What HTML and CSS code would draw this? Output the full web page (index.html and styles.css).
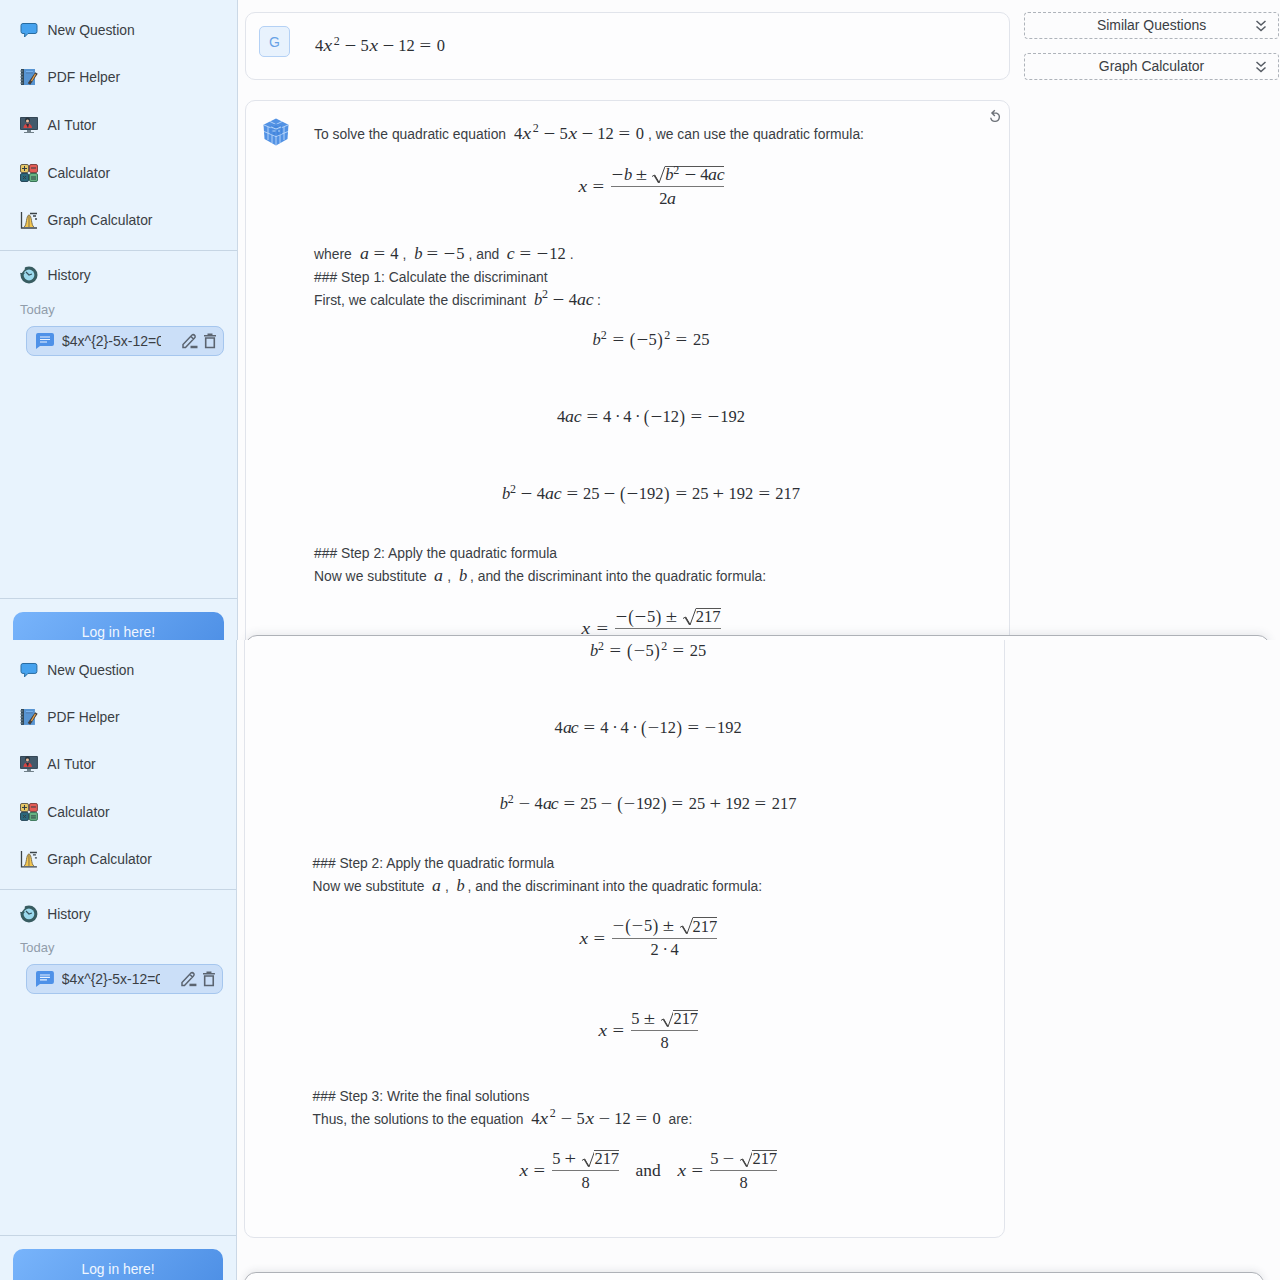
FILE: index.html
```html
<!DOCTYPE html>
<html lang="en">
<head>
<meta charset="utf-8">
<title>Math Solver</title>
<link rel="stylesheet" href="styles.css">
</head>
<body>
<template id="screen">
  <aside class="sidebar">
    <nav class="nav">
      <a class="nav-item"><svg class="icon" viewBox="0 0 18 18"><path d="M3 2.500h12q2 0 2 2v6q0 2-2 2H8L4.500 16l.3-3.500H3q-2 0-2-2v-6q0-2 2-2z" fill="#46a2ee" stroke="#286b9f"/></svg>New Question</a>
      <a class="nav-item"><svg class="icon" viewBox="0 0 18 18"><path d="M1 1h14v16H1z" fill="#5794d2"/><path d="M1 1h3v16H1z" fill="#344957"/><path d="M0 3h3M0 6h3M0 9h3M0 12h3M0 15h3" stroke="#768995"/><path d="M6 3h7v3H6z" fill="#77b1ed"/><path d="M6 5h7" stroke="#315e91"/><path d="M16.500 5 11 13l-2 3" stroke="#443f3b" stroke-width="3"/><path d="m15.500 6-4 7" stroke="#e7a14b" stroke-width="1.300"/></svg>PDF Helper</a>
      <a class="nav-item"><svg class="icon" viewBox="0 0 18 18"><path d="M.5 1.500h17v12H.5z" fill="#42596b" stroke="#344655"/><path d="M3.500 12q0-4 4-4.500 4.500.5 4.500 4.500z" fill="#d34543"/><path d="m6 8 2 4 1-4" fill="#23313b"/><circle cx="7.500" cy="4" r="2.500" fill="#28343d"/><circle cx="7.500" cy="5" r="1.500" fill="#edbc9b"/><path d="M7 14h4v2H7zM4 16h10v1H4z" fill="#718089"/></svg>AI Tutor</a>
      <a class="nav-item"><svg class="icon" viewBox="0 0 18 18"><rect x=".5" y=".5" width="8" height="8" rx="1.500" fill="#e7c766" stroke="#635f51"/><rect x="9.500" y=".5" width="8" height="8" rx="1.500" fill="#e35b55" stroke="#804543"/><rect x=".5" y="9.500" width="8" height="8" rx="1.500" fill="#2c687c" stroke="#28495b"/><rect x="9.500" y="9.500" width="8" height="8" rx="1.500" fill="#67b382" stroke="#397457"/><path d="M4.500 2v5M2 4.500h5M11 4h5M3 12l3 3M6 12l-3 3M11 13h5M11 15h5" stroke="#303f45" fill="none"/></svg>Calculator</a>
      <a class="nav-item"><svg class="icon" viewBox="0 0 18 18"><path d="M4 16c3-1 2-12 5-12s2 11 5 12z" fill="#f3c64e"/><path d="M4 16c3-1 2-12 5-12s2 11 5 12M9 5v11" fill="none" stroke="#80704c"/><path d="M1.500 1v16H17M10 2.500h7M13 5h3M15 8h2" stroke="#3b4347" stroke-width="1.300" fill="none"/></svg>Graph Calculator</a>
    </nav>
    <section class="history">
      <div class="history-title"><svg class="icon" viewBox="0 0 18 18"><circle cx="9" cy="9" r="8.500" fill="#385c61"/><circle cx="9" cy="9" r="5.400" fill="#9bd9ed"/><path d="m6 6 3 3 3-1" fill="none" stroke="#36525e" stroke-width="1.200"/><path d="M0 4 4 .5 5 3 1 8z" fill="#e8f2fc"/><path d="m0 7 2 3 3-3z" fill="#365c61"/></svg>History</div>
      <div class="day">Today</div>
      <div class="chat">
        <svg class="chat-icon" viewBox="0 0 18 18"><path d="M2 1h14q2 0 2 2v9q0 2-2 2H4l-4 3V3q0-2 2-2z" fill="#4e91e8"/><path d="M4 5h10M4 7.500h10M4 10h7" stroke="#e8f2ff" stroke-width="1.200"/></svg>
        <span class="chat-name">$4x^{2}-5x-12=0$</span>
        <svg class="tool" viewBox="0 0 16 16"><path d="M1.500 14.500v-3L10.500 2q1.500-1 3 .8.600 1.200-.5 2.200L4 14.500zM9.500 3.500l2.500 2.500" fill="none" stroke="#5b6470" stroke-width="1.500"/><path d="M9 14h7" stroke="#5b6470" stroke-width="2.500"/></svg>
        <svg class="tool bin" viewBox="0 0 14 16"><path d="M1 2.700h12M4.500 1.200h5M2.700 5h8.600v9.500H2.700z" fill="none" stroke="#5b6470" stroke-width="1.600"/></svg>
      </div>
    </section>
    <div class="sidebar-foot"><a class="login">Log in here!</a></div>
  </aside>
  <main class="main">
    <div class="thread">
      <article class="card question"><span class="avatar">G</span><div><span class="m">4x^2 - 5x - 12 = 0</span></div></article>
      <article class="card answer">
        <svg class="cube" viewBox="0 0 26 28"><path d="m13 .5 12.500 6.200-1 14.300L13 27.500 1.500 21 .5 6.700z" fill="#5292e4"/><path d="m1 7 12 5 12-5M13 12v15M1 13.500l12 5 12-5M7 3.500l12 6M19 3.500l-12 6M5 9v13M9 10.500V25M17 10.500V25M21 9v13" fill="none" stroke="#c9e1fc" stroke-width=".8"/><path d="M7.500 8 13 5.500 19 8v8l-6 2-5.500-2z" fill="#3f83dc" opacity=".75"/><path d="m8 9 5 2 5-2M9.500 13h3M15 13h2" fill="none" stroke="#b9d8fb"/></svg>
        <div class="body">
          <p>To solve the quadratic equation <span class="m">4x^2 - 5x - 12 = 0</span>, we can use the quadratic formula:</p>
          <div class="display frac-row gap-14"><span class="m">x = {~b ± [b^2 - 4ac]|2a}</span></div>
          <p>where <span class="m">a = 4</span>, <span class="m">b = ~5</span>, and <span class="m">c = ~12</span>.</p>
          <p>### Step 1: Calculate the discriminant</p>
          <p>First, we calculate the discriminant <span class="m">b^2 - 4ac</span>:</p>
          <div class="display gap-20"><span class="m">b^2 = (~5)^2 = 25</span></div>
          <div class="display gap-20"><span class="m">4ac = 4 · 4 · (~12) = ~192</span></div>
          <div class="display gap-19"><span class="m">b^2 - 4ac = 25 - (~192) = 25 + 192 = 217</span></div>
          <p>### Step 2: Apply the quadratic formula</p>
          <p>Now we substitute <span class="m">a</span>, <span class="m">b</span>, and the discriminant into the quadratic formula:</p>
          <div class="display frac-row gap-10"><span class="m">x = {~(~5) ± [217]|2 · 4}</span></div>
          <div class="display frac-row gap-12"><span class="m">x = {5 ± [217]|8}</span></div>
          <p>### Step 3: Write the final solutions</p>
          <p>Thus, the solutions to the equation <span class="m">4x^2 - 5x - 12 = 0</span> are:</p>
          <div class="display frac-row"><span class="m">x = {5 + [217]|8}</span><span class="word">and</span><span class="m">x = {5 - [217]|8}</span></div>
        </div>
        <svg class="retry" viewBox="0 0 12 12"><path d="M2.500 3.500h4a3.700 3.700 0 1 1-5 4M5 1 2.500 3.500 5 6" fill="none" stroke="#6c7178" stroke-width="1.200"/></svg>
      </article>
    </div>
    <div class="tools">
      <div class="panel">Similar Questions<svg class="chevrons" viewBox="0 0 12 14"><path d="m1.500 2 4.500 4 4.500-4M1.500 7.500l4.500 4 4.500-4" fill="none" stroke="#555b63" stroke-width="1.500"/></svg></div>
      <div class="panel">Graph Calculator<svg class="chevrons" viewBox="0 0 12 14"><path d="m1.500 2 4.500 4 4.500-4M1.500 7.500l4.500 4 4.500-4" fill="none" stroke="#555b63" stroke-width="1.500"/></svg></div>
    </div>
  </main>
  <div class="composer"></div>
</template>
<div class="screen"></div>
<div class="screen"><div class="scrolled"></div></div>
<script src="script.js"></script>
</body>
</html>
```
FILE: styles.css
```css
* { box-sizing: border-box; }
body { margin: 0; width: 1280px; height: 1280px; overflow: hidden; background: #fcfcfd; font-family: "Liberation Sans", Arial, sans-serif; color: #3a3e44; }
.screen, .scrolled { position: relative; display: flex; height: 640px; overflow: hidden; background: #fcfcfd; }
.scrolled { zoom: .9955; height: 643px; width: 1286px; flex: none; }

.sidebar { width: 238px; height: 640px; flex: none; display: flex; flex-direction: column; overflow: hidden; background: #e8f3fd; border-right: 1px solid #cbd8e6; }
.scrolled .sidebar { height: 643px; }
.nav { flex: none; height: 251px; padding-top: 6px; border-bottom: 1px solid #c6d5e4; }
.nav-item, .history-title { display: flex; align-items: center; gap: 9.500px; height: 47.6px; padding-left: 20px; font-size: 13.900px; }
.icon { width: 18px; height: 18px; flex: none; }
.history { flex: none; height: 347px; }
.day { margin: 4px 0 0 20px; font-size: 13px; line-height: 14px; color: #919dab; }
.chat { display: flex; align-items: center; width: 198px; height: 30px; margin: 9px 0 0 26px; padding: 0 7px 0 9px; background: #cbdff8; border: 1px solid #a5c6ee; border-radius: 8px; font-size: 14px; }
.chat-icon { width: 18px; height: 18px; flex: none; }
.chat-name { width: 99px; flex: none; margin: 0 20px 0 8px; overflow: hidden; white-space: nowrap; }
.tool { width: 17px; height: 16px; flex: none; }
.bin { width: 14px; margin-left: 5px; }
.sidebar-foot { flex: 1; min-height: 0; padding: 13px 13px 0; border-top: 1px solid #c6d5e4; }
.login { display: flex; align-items: center; justify-content: center; width: 211px; height: 40px; border-radius: 10px; background: linear-gradient(135deg, #78b4fb, #4d8fe5); color: #f0f7ff; font-size: 13.900px; }

.main { display: flex; align-items: flex-start; gap: 14px; padding: 12px 0 0 7px; }
.scrolled .main { margin-top: -329px; }
.scrolled .tools, .scrolled .question, .scrolled .body > :nth-child(-n+5) { visibility: hidden; }
.thread { width: 765px; flex: none; }
.card { display: flex; border: 1px solid #e1e4eb; border-radius: 10px; background: #fdfdfe; }
.question { height: 68px; padding: 13px; gap: 25px; }
.question > div { padding-top: 8px; line-height: 23px; }
.question .m { margin: 0; }
.avatar { width: 31px; height: 31px; display: flex; align-items: center; justify-content: center; border: 1px solid #b4d1f5; border-radius: 5px; background: #e8f2fd; color: #68a2e6; font-size: 14px; }
.answer { height: 830px; margin-top: 20px; padding: 17px 7px 0 17px; }
.cube { width: 26px; height: 28px; flex: none; }
.body { width: 674px; margin: 4.500px 0 0 25px; flex: none; font-size: 13.880px; }
.body p { margin: 0; height: 23px; line-height: 23px; white-space: nowrap; }
.scrolled .body p { padding-top: 1px; }
.retry { width: 14px; height: 14px; margin: -9px 0 0 1px; flex: none; }

.display { display: flex; align-items: center; justify-content: center; height: 57px; }
.frac-row { height: 83px; }
.gap-10 { margin-bottom: 10px; }
.gap-12 { margin-bottom: 11.500px; }
.gap-14 { margin-bottom: 14px; }
.gap-19 { margin-bottom: 19px; }
.gap-20 { margin-bottom: 20px; }

.m, .word { font-family: "Liberation Serif", serif; font-size: 16.500px; line-height: 20px; white-space: nowrap; color: #2c2f34; }
.m { margin: 0 4px; }
.display .m { display: flex; align-items: center; margin: 0; }
.word { margin: 0 16.500px; font-size: 17.500px; }
.m i, .m .op { display: inline-block; text-align: center; line-height: 20px; }
.m i { transform: scaleX(1.08); }
.m .x { width: .572em; transform: scaleX(1.18); }
.m .a { width: .529em; }
.m .b { width: .429em; transform: none; text-align: left; }
.m .c { width: .433em; }
.m .op { width: .778em; transform: scaleX(1.25); }
.m .bin-op { margin: 0 .222em; }
.m .rel { margin: 0 .278em; }
.m .dot { width: .278em; transform: none; margin: 0 .222em; }
.m .paren { display: inline-block; width: .389em; text-align: center; transform: scaleY(1.1); }
.m sup { display: inline-block; width: .64em; padding-left: 1px; font-size: 12px; line-height: 0; vertical-align: 6.500px; }
.display .m sup { align-self: center; transform: translateY(-5.500px); }
.frac { display: inline-flex; flex-direction: column; align-items: center; margin-left: 2px; }
.num, .den { display: flex; align-items: center; justify-content: center; height: 22.500px; }
.num { align-self: stretch; border-bottom: 1px solid #777; padding: 0 0 1px; }
.den { padding-top: 1px; }
.root { display: inline-flex; height: 20px; }
.root svg { width: 14px; height: 19px; }
.radicand { display: flex; align-items: center; height: 18px; margin-top: 1px; border-top: 1px solid #555; }

.panel { position: relative; display: flex; align-items: center; justify-content: center; width: 255px; height: 27px; margin-bottom: 14px; padding-bottom: 1px; border: 1px dashed #aeb3ba; border-radius: 4px; font-size: 13.950px; }
.chevrons { position: absolute; right: 11px; top: 6px; width: 12px; height: 14px; }
.composer { position: absolute; left: 245px; top: 635px; width: 1025px; height: 60px; border: 1px solid #aeb1b7; border-radius: 12px; background: #fdfdfe; box-shadow: 0 -2px 8px rgba(60, 70, 90, .1); }
```
FILE: script.js
```js
// Compact math notation: ~ unary minus, [..] square root, {num|den} fraction.
const ops = { '-': '−', '±': '±', '+': '+' };

function typeset(src) {
  let out = '';
  for (let i = 0; i < src.length; i++) {
    const ch = src[i];
    if (ch === ' ') continue;
    if (ch === '{') {
      const end = src.indexOf('}', i);
      const [num, den] = src.slice(i + 1, end).split('|');
      out += `<span class="frac"><span class="num">${typeset(num)}</span><span class="den">${typeset(den)}</span></span>`;
      i = end;
    } else if (ch === '[') {
      const end = src.indexOf(']', i);
      out += `<span class="root"><svg viewBox="0 0 14 19"><path d="M1 11.500 3.500 10 8 18 14 1.500" fill="none" stroke="#444"/><path d="m3.500 10.500 4.200 7" stroke="#444" stroke-width="1.500"/></svg><span class="radicand">${typeset(src.slice(i + 1, end))}</span></span>`;
      i = end;
    } else if (ch === '^') {
      out += `<sup>${src[++i]}</sup>`;
    } else if (ch === '=') {
      out += '<span class="op rel">=</span>';
    } else if (ch === '~') {
      out += '<span class="op">−</span>';
    } else if (ch === '·') {
      out += '<span class="op dot">·</span>';
    } else if (ops[ch]) {
      out += `<span class="op bin-op">${ops[ch]}</span>`;
    } else if (/[abcx]/.test(ch)) {
      out += `<i class="${ch}">${ch}</i>`;
    } else if (/[()]/.test(ch)) {
      out += `<span class="paren">${ch}</span>`;
    } else {
      out += `<span>${ch}</span>`;
    }
  }
  return out;
}

const screen = document.getElementById('screen');
document.querySelectorAll('.screen').forEach(el => {
  (el.querySelector('.scrolled') || el).append(screen.content.cloneNode(true));
});
document.querySelectorAll('.m').forEach(el => { el.innerHTML = typeset(el.textContent); });
```
